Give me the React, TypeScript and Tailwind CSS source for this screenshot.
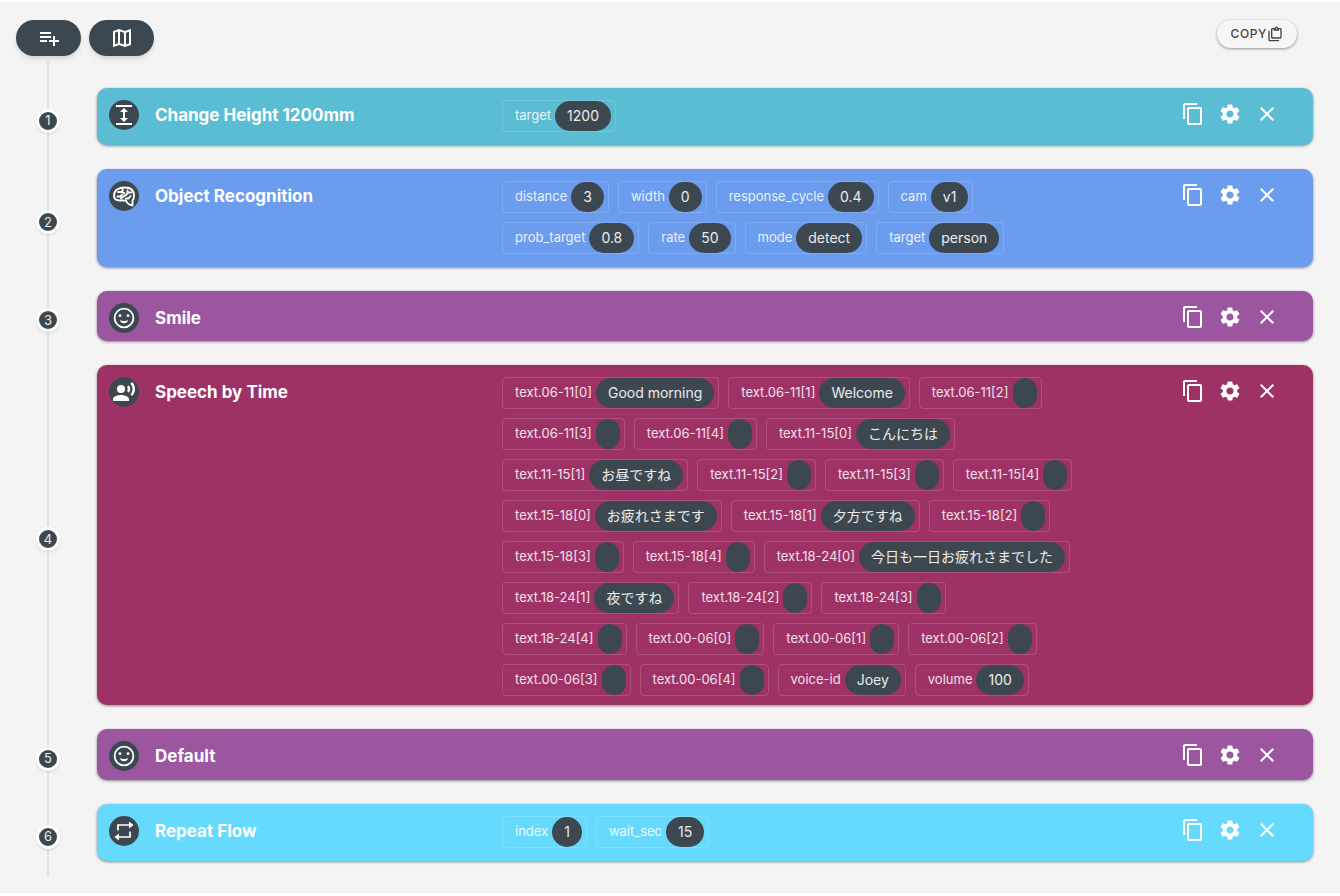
import type { ReactNode } from "react";
import {
  MdClose,
  MdContentCopy,
  MdExpand,
  MdOutlineMap,
  MdPlaylistAdd,
  MdRecordVoiceOver,
  MdSettings,
} from "react-icons/md";

type Param = [name: string, value: string];

type Step = {
  title: string;
  icon: ReactNode;
  color: string;
  height: string;
  params: Param[];
};

function BrainIcon() {
  return (
    <svg viewBox="0 0 24 24" className="size-6" fill="none" stroke="currentColor" strokeWidth="1.9" strokeLinecap="round" strokeLinejoin="round" aria-hidden="true">
      <path d="M20.500 21.500v-5c1.200-1 1.500-2.600 1.500-4.500 0-5.500-3.500-8.500-9-8.500C6.500 3.500 2 6.500 2 11.500 2 15 4 16.500 7.500 16.500H14c1 2.500 3.500 4.500 6.500 5z" />
      <path d="M6 8h4.500M10.500 5v3l2 1.500M5.500 12.500h3l1.500-2M9 14.500l3-2.500M15.500 6.500v3l-2 2M19 8.500h-2.500M14 14.500h2.500l2-2.500" />
    </svg>
  );
}

function SmileIcon() {
  return (
    <svg viewBox="0 0 24 24" className="size-6" fill="currentColor" aria-hidden="true">
      <circle cx="12" cy="12" r="9.400" fill="none" stroke="currentColor" strokeWidth="1.800" />
      <circle cx="8" cy="9.700" r="1.400" />
      <circle cx="16" cy="9.700" r="1.400" />
      <path d="M7.800 14.200c2.600 1.100 5.800 1.100 8.400 0-.6 1.900-2.200 3-4.200 3s-3.600-1.100-4.200-3z" />
    </svg>
  );
}

function LoopIcon() {
  return (
    <svg viewBox="0 0 24 24" className="size-6" fill="none" stroke="currentColor" strokeWidth="1.7" aria-hidden="true">
      <path d="M6 11.500V6h11M18 12.500V18H7" />
      <path d="M17 2.500 21.500 6 17 9.500zM7 14.500 2.500 18 7 21.500z" fill="currentColor" stroke="none" />
    </svg>
  );
}

function ClipboardsIcon() {
  return (
    <svg viewBox="0 0 24 24" className="size-4" fill="currentColor" aria-hidden="true">
      <path d="M4 7v14h14v2H4c-1.100 0-2-.9-2-2V7h2m16-4c1.100 0 2 .9 2 2v12c0 1.100-.9 2-2 2H8c-1.100 0-2-.9-2-2V5c0-1.100.9-2 2-2h3.180C11.600 1.840 12.700 1 14 1s2.400.84 2.820 2H20m-6 0c-.55 0-1 .45-1 1s.45 1 1 1 1-.45 1-1-.45-1-1-1m-4 4V5H8v12h12V5h-2v2h-8z" />
    </svg>
  );
}

const steps: Step[] = [
  {
    title: "Change Height 1200mm",
    icon: <MdExpand className="size-6" />,
    color: "bg-[#5bbdd3]",
    height: "min-h-[57px]",
    params: [["target", "1200"]],
  },
  {
    title: "Object Recognition",
    icon: <BrainIcon />,
    color: "bg-[#6b9cee]",
    height: "min-h-[98px]",
    params: [
      ["distance", "3"],
      ["width", "0"],
      ["response_cycle", "0.4"],
      ["cam", "v1"],
      ["prob_target", "0.8"],
      ["rate", "50"],
      ["mode", "detect"],
      ["target", "person"],
    ],
  },
  {
    title: "Smile",
    icon: <SmileIcon />,
    color: "bg-[#9c56a0]",
    height: "min-h-[50px]",
    params: [],
  },
  {
    title: "Speech by Time",
    icon: <MdRecordVoiceOver className="size-6" />,
    color: "bg-[#9e3267]",
    height: "min-h-[340px]",
    params: [
      ["text.06-11[0]", "Good morning"],
      ["text.06-11[1]", "Welcome"],
      ["text.06-11[2]", ""],
      ["text.06-11[3]", ""],
      ["text.06-11[4]", ""],
      ["text.11-15[0]", "こんにちは"],
      ["text.11-15[1]", "お昼ですね"],
      ["text.11-15[2]", ""],
      ["text.11-15[3]", ""],
      ["text.11-15[4]", ""],
      ["text.15-18[0]", "お疲れさまです"],
      ["text.15-18[1]", "夕方ですね"],
      ["text.15-18[2]", ""],
      ["text.15-18[3]", ""],
      ["text.15-18[4]", ""],
      ["text.18-24[0]", "今日も一日お疲れさまでした"],
      ["text.18-24[1]", "夜ですね"],
      ["text.18-24[2]", ""],
      ["text.18-24[3]", ""],
      ["text.18-24[4]", ""],
      ["text.00-06[0]", ""],
      ["text.00-06[1]", ""],
      ["text.00-06[2]", ""],
      ["text.00-06[3]", ""],
      ["text.00-06[4]", ""],
      ["voice-id", "Joey"],
      ["volume", "100"],
    ],
  },
  {
    title: "Default",
    icon: <SmileIcon />,
    color: "bg-[#9c56a0]",
    height: "min-h-[51px]",
    params: [],
  },
  {
    title: "Repeat Flow",
    icon: <LoopIcon />,
    color: "bg-[#66dafc]",
    height: "min-h-[57px]",
    params: [
      ["index", "1"],
      ["wait_sec", "15"],
    ],
  },
];

function Chip({ name, value }: { name: string; value: string }) {
  return (
    <li className="flex h-8 items-center gap-1 rounded-sm border border-white/15 pl-3 pr-1 text-[13px] text-white/85">
      {name}
      <span className="flex h-[30px] items-center rounded-2xl bg-[#3d474f] px-3 text-sm text-white/90">
        {value}
      </span>
    </li>
  );
}

function StepRow({ step, index }: { step: Step; index: number }) {
  return (
    <li className="flex">
      <div className="flex w-16 shrink-0 items-center justify-center pt-2">
        <span className="relative grid size-6 place-items-center rounded-full border-[3px] border-white bg-[#3d474f] text-[13px] leading-none text-white/90 shadow-sm">
          {index}
        </span>
      </div>
      <article
        className={`ml-[17px] flex flex-1 rounded-[10px] px-3 pb-2 pt-3 shadow-[0_1px_3px_rgba(0,0,0,0.45)] ${step.color} ${step.height}`}
      >
        <div className="flex w-[393px] shrink-0 items-start gap-4">
          <span className="grid size-[30px] place-items-center rounded-full bg-[#3d474f] text-white">
            {step.icon}
          </span>
          <h2 className="text-[17px] font-bold leading-[30px] text-white">{step.title}</h2>
        </div>
        <ul className="flex max-w-[576px] flex-1 flex-wrap content-start gap-[9px]">
          {step.params.map(([name, value]) => (
            <Chip key={name} name={name} value={value} />
          ))}
        </ul>
        <div className="ml-auto mr-5 flex items-start gap-[9px] text-white">
          <button type="button" aria-label={`Duplicate ${step.title}`} className="grid size-7 place-items-center">
            <MdContentCopy className="size-6" />
          </button>
          <button type="button" aria-label={`Settings for ${step.title}`} className="grid size-7 place-items-center">
            <MdSettings className="size-6" />
          </button>
          <button type="button" aria-label={`Remove ${step.title}`} className="grid size-7 place-items-center">
            <MdClose className="size-6" />
          </button>
        </div>
      </article>
    </li>
  );
}

export default function App() {
  return (
    <main className="min-h-screen border-b-[3px] border-t-2 border-white bg-[#f4f4f4] pb-4 pl-4 pr-[27px] pt-[18px] font-['Inter','Noto_Sans_CJK_JP',sans-serif]">
      <header className="flex items-start gap-2">
        <button type="button" aria-label="Add step" className="grid h-9 w-[65px] place-items-center rounded-full bg-[#3d474f] text-white shadow-md">
          <MdPlaylistAdd className="size-6" />
        </button>
        <button type="button" aria-label="Map" className="grid h-9 w-[65px] place-items-center rounded-full bg-[#3d474f] text-white shadow-md">
          <MdOutlineMap className="size-6" />
        </button>
        <button
          type="button"
          className="ml-auto mr-4 flex h-7 items-center rounded-full bg-[#f6f6f6] px-3.5 text-xs font-medium tracking-wider text-[#444] shadow-[0_1px_3px_rgba(0,0,0,0.4)]"
        >
          COPY
          <ClipboardsIcon />
        </button>
      </header>
      <ol className="relative flex flex-col gap-6 pb-4 pt-8">
        <li className="absolute bottom-0 left-[31px] top-0 w-0.5 bg-[#e2e2e2]" aria-hidden="true" />
        {steps.map((step, i) => (
          <StepRow key={step.title} step={step} index={i + 1} />
        ))}
      </ol>
    </main>
  );
}
